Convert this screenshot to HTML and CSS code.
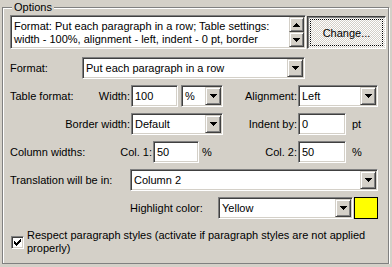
FILE: index.html
```html
<!DOCTYPE html>
<html lang="en">
<head>
    <meta charset="UTF-8">
    <meta name="viewport" content="width=device-width, initial-scale=1.0">
    <title>Options</title>
    <link rel="stylesheet" href="styles.css">
</head>
<body>
    <fieldset class="group">
        <legend>Options</legend>

        <div class="summary-row">
            <div class="summary sunken">
                <div class="summary-text">Format: Put each paragraph in a row; Table settings:<br>width - 100%, alignment - left, indent - 0 pt, border</div>
                <div class="spin">
                    <span class="bevel-btn"><svg width="7" height="4" shape-rendering="crispEdges"><path d="M3 0h1v1h1v1h1v1h1v1h-7v-1h1v-1h1v-1h1z"/></svg></span>
                    <span class="bevel-btn"><svg width="7" height="4" shape-rendering="crispEdges"><path d="M0 0h7v1h-1v1h-1v1h-1v1h-1v-1h-1v-1h-1v-1h-1z"/></svg></span>
                </div>
            </div>
            <button class="change" type="button"><span class="focus">Change...</span></button>
        </div>

        <div class="row">
            <span class="lbl lbl-first">Format:</span>
            <div class="field sunken w-format">
                <span class="value">Put each paragraph in a row</span>
                <span class="bevel-btn drop"><svg width="7" height="4" shape-rendering="crispEdges"><path d="M0 0h7v1h-1v1h-1v1h-1v1h-1v-1h-1v-1h-1v-1h-1z"/></svg></span>
            </div>
        </div>

        <div class="row">
            <span class="lbl lbl-first">Table format:</span>
            <span class="lbl right w-width-lbl">Width:</span>
            <div class="field sunken w-width"><span class="value">100</span></div>
            <div class="field sunken w-unit">
                <span class="value">%</span>
                <span class="bevel-btn drop"><svg width="7" height="4" shape-rendering="crispEdges"><path d="M0 0h7v1h-1v1h-1v1h-1v1h-1v-1h-1v-1h-1v-1h-1z"/></svg></span>
            </div>
            <span class="lbl right w-mid-lbl">Alignment:</span>
            <div class="field sunken w-align">
                <span class="value">Left</span>
                <span class="bevel-btn drop"><svg width="7" height="4" shape-rendering="crispEdges"><path d="M0 0h7v1h-1v1h-1v1h-1v1h-1v-1h-1v-1h-1v-1h-1z"/></svg></span>
            </div>
        </div>

        <div class="row">
            <span class="lbl right w-border-lbl">Border width:</span>
            <div class="field sunken w-border">
                <span class="value">Default</span>
                <span class="bevel-btn drop"><svg width="7" height="4" shape-rendering="crispEdges"><path d="M0 0h7v1h-1v1h-1v1h-1v1h-1v-1h-1v-1h-1v-1h-1z"/></svg></span>
            </div>
            <span class="lbl right w-mid-lbl">Indent by:</span>
            <div class="field sunken w-small"><span class="value">0</span></div>
            <span class="unit">pt</span>
        </div>

        <div class="row">
            <span class="lbl w-colw-lbl">Column widths:</span>
            <span class="lbl right w-col1-lbl">Col. 1:</span>
            <div class="field sunken w-col1"><span class="value">50</span></div>
            <span class="unit w-unit-cell">%</span>
            <span class="lbl right w-mid-lbl">Col. 2:</span>
            <div class="field sunken w-small"><span class="value">50</span></div>
            <span class="unit">%</span>
        </div>

        <div class="row">
            <span class="lbl w-trans-lbl">Translation will be in:</span>
            <div class="field sunken w-trans">
                <span class="value">Column 2</span>
                <span class="bevel-btn drop"><svg width="7" height="4" shape-rendering="crispEdges"><path d="M0 0h7v1h-1v1h-1v1h-1v1h-1v-1h-1v-1h-1v-1h-1z"/></svg></span>
            </div>
        </div>

        <div class="row row-highlight">
            <span class="lbl w-hl-lbl">Highlight color:</span>
            <div class="field sunken w-hl">
                <span class="value">Yellow</span>
                <span class="bevel-btn drop"><svg width="7" height="4" shape-rendering="crispEdges"><path d="M0 0h7v1h-1v1h-1v1h-1v1h-1v-1h-1v-1h-1v-1h-1z"/></svg></span>
            </div>
            <span class="swatch"></span>
        </div>

        <label class="check-row">
            <span class="checkbox sunken"><svg width="7" height="7" shape-rendering="crispEdges"><path d="M6 0h1v1h-1zM5 1h2v1h-2zM0 2h1v1h-1zM4 2h3v1h-3zM0 3h2v1h-2zM3 3h3v1h-3zM0 4h5v1h-5zM1 5h3v1h-3zM2 6h1v1h-1z"/></svg></span>
            <span class="check-text">Respect paragraph styles (activate if paragraph styles are not applied<br>properly)</span>
        </label>
    </fieldset>
</body>
</html>
```

FILE: styles.css
```css
body {
    background-color: #d4d0c8;
    font-family: 'Liberation Sans', Arial, sans-serif;
    font-size: 11px;
    line-height: 13px;
    color: #000;
    margin: 0;
    white-space: nowrap;
}
.group {
    box-sizing: border-box;
    width: 387px;
    height: 264px;
    margin: 0 0 0 2px;
    padding: 1px 0 0 7px;
    min-width: 0;
    border: 1px solid #808080;
    box-shadow: inset 1px 1px #fff, 1px 1px 0 #fff;
}
.group legend {
    margin-left: 2px;
    padding: 0 2px;
    line-height: 14px;
    background-color: #d4d0c8;
}

/* 3d borders */
.sunken {
    box-sizing: border-box;
    background-color: #fff;
    border: 1px solid;
    border-color: #808080 #fff #fff #808080;
    box-shadow: inset 1px 1px #404040, inset -1px -1px #d4d0c8;
    padding: 1px;
}
.bevel-btn {
    box-sizing: border-box;
    display: flex;
    align-items: center;
    justify-content: center;
    background-color: #d4d0c8;
    border: 1px solid;
    border-color: #d4d0c8 #404040 #404040 #d4d0c8;
    box-shadow: inset 1px 1px #fff, inset -1px -1px #808080;
}

/* summary box + change button */
.summary-row {
    display: flex;
    align-items: flex-start;
}
.summary {
    display: flex;
    width: 296px;
    height: 34px;
    margin-right: 1px;
}
.summary-text {
    flex: 1;
    padding: 3px 0 0 2px;
}
.spin {
    display: flex;
    flex-direction: column;
    width: 15px;
}
.spin .bevel-btn {
    flex: 1;
}
.change {
    box-sizing: border-box;
    width: 79px;
    height: 33px;
    margin-top: 1px;
    padding: 2px;
    font: inherit;
    color: #000;
    border: 1px solid;
    border-color: #404040 #fff #fff #404040;
    box-shadow: inset 1px 1px #808080;
    background: repeating-conic-gradient(#fff 0 25%, #d4d0c8 0 50%) 0 0 / 2px 2px;
    display: flex;
}
.focus {
    flex: 1;
    display: flex;
    align-items: center;
    justify-content: center;
    border: 1px dotted #000;
    padding-top: 1px;
}

/* form rows */
.row {
    display: flex;
    align-items: center;
    height: 22px;
    margin-top: 6px;
}
.summary-row + .row {
    margin-top: 8px;
}
.lbl {
    box-sizing: border-box;
}
.lbl.right {
    text-align: right;
    padding-right: 1px;
}
.lbl-first { width: 72px; }
.w-width-lbl { width: 49px; }
.w-mid-lbl { width: 75px; }
.w-border-lbl { width: 121px; }
.w-colw-lbl { width: 96px; }
.w-col1-lbl { width: 47px; }
.w-trans-lbl { width: 120px; }
.w-hl-lbl { width: 88px; margin-left: 120px; }

.field {
    display: flex;
    height: 22px;
}
.value {
    flex: 1;
    display: flex;
    align-items: center;
    padding-left: 2px;
    overflow: hidden;
}
.drop {
    width: 16px;
}
.w-format { width: 223px; }
.w-width { width: 47px; margin-right: 3px; }
.w-unit { width: 42px; }
.w-align { width: 80px; }
.w-border { width: 92px; }
.w-small { width: 48px; }
.w-col1 { width: 46px; }
.w-trans { width: 248px; }
.w-hl { width: 135px; }

.unit {
    margin-left: 6px;
}
.w-unit-cell {
    box-sizing: border-box;
    width: 24px;
    margin-left: 0;
    padding-left: 3px;
}
.swatch {
    box-sizing: border-box;
    width: 24px;
    height: 22px;
    margin-left: 1px;
    border: 1px solid #000;
    background-color: #ffff00;
}

/* checkbox */
.check-row {
    display: flex;
    align-items: center;
    margin-top: 10px;
}
.checkbox {
    display: flex;
    align-items: center;
    justify-content: center;
    width: 13px;
    height: 13px;
    margin-left: 1px;
    padding: 0;
}
.check-text {
    margin-left: 3px;
}
```
